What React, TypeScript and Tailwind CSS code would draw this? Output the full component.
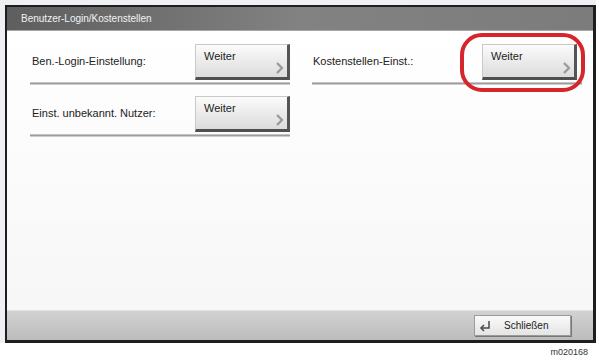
import React from 'react';

function Chevron() {
  return (
    <svg width="9" height="12" viewBox="0 0 9 12" className="absolute right-[3px] bottom-[3px]">
      <polyline points="2,1 7,6 2,11" fill="none" stroke="#9a9a9a" strokeWidth="2.4" strokeLinejoin="round" />
    </svg>
  );
}

function WeiterButton() {
  return (
    <div className="relative w-[95px] h-[36px] shrink-0 bg-gradient-to-b from-[#fbfbfb] to-[#dcdcdc] border-t border-l border-[#c9c9c9] border-r-[3px] border-b-[3px] border-r-[#555] border-b-[#4f4f4f]">
      <span className="absolute left-[8px] top-[3px] text-[11px] text-[#222]">Weiter</span>
      <Chevron />
    </div>
  );
}

function Separator() {
  return <div className="h-[3px] mt-[2px] bg-gradient-to-b from-[#d8d8d8] via-[#9c9c9c] to-[#e6e6e6]" />;
}

function SettingRow({ label }: { label: string }) {
  return (
    <div>
      <div className="flex items-center justify-between">
        <span className="text-[11px] text-[#222] pl-[2px] -mt-[2px]">{label}</span>
        <WeiterButton />
      </div>
      <Separator />
    </div>
  );
}

export default function App() {
  return (
    <div className="w-[599px] h-[360px] bg-white font-['Liberation_Sans',Arial,sans-serif] relative">
      <div className="bg-[#eef0f4] w-[596px] pl-[5px] pt-[5px]">
        <div className="w-[591px] h-[338px] flex flex-col border-t-2 border-l-2 border-r-[3px] border-b-[3px] border-[#1e1e1e] bg-white">
          {/* title bar */}
          <div className="h-[24px] flex items-center pl-[14px] bg-gradient-to-r from-[#5e5e5e] via-[#828282] to-[#7c7c7c] border-b border-[#a8a8a8]">
            <span className="text-[10px] text-[#f2f2f2]">Benutzer-Login/Kostenstellen</span>
          </div>

          {/* content */}
          <div className="flex-1 flex pt-[13px] pl-[23px] bg-gradient-to-b from-white to-[#f7f7f7]">
            <div className="w-[260px] flex flex-col gap-[11px]">
              <SettingRow label="Ben.-Login-Einstellung:" />
              <SettingRow label="Einst. unbekannt. Nutzer:" />
            </div>
            <div className="w-[270px] ml-[22px] flex flex-col">
              <div>
                <div className="flex items-center justify-between pr-[5px]">
                  <span className="text-[11px] text-[#222] pl-[1px] -mt-[2px]">Kostenstellen-Einst.:</span>
                  <WeiterButton />
                </div>
                <Separator />
              </div>
            </div>
          </div>

          {/* bottom bar */}
          <div className="h-[30px] flex items-center justify-end pr-[22px] bg-gradient-to-b from-[#d2d2d2] to-[#bcbcbc] border-t border-[#e2e2e2]">
            <div className="w-[97px] h-[21px] flex items-center bg-gradient-to-b from-[#fafafa] to-[#e4e4e4] border border-[#9a9a9a] shadow-[1px_1px_0_#777]">
              <svg width="14" height="12" viewBox="0 0 14 12" className="ml-[3px]">
                <polyline points="11,1 11,8 3,8" fill="none" stroke="#4a4a4a" strokeWidth="1.5" />
                <polyline points="6,5 3,8 6,11" fill="none" stroke="#4a4a4a" strokeWidth="1.5" />
              </svg>
              <span className="ml-[12px] text-[10px] text-[#222]">Schließen</span>
            </div>
          </div>
        </div>
      </div>
      <div className="w-[588px] text-right text-[9px] text-[#333] mt-[3px]">m020168</div>

      {/* red highlight ring */}
      <div className="absolute left-[460px] top-[33px] w-[125px] h-[59px] border-[4px] border-[#d6262c] rounded-[22px]" />
    </div>
  );
}
